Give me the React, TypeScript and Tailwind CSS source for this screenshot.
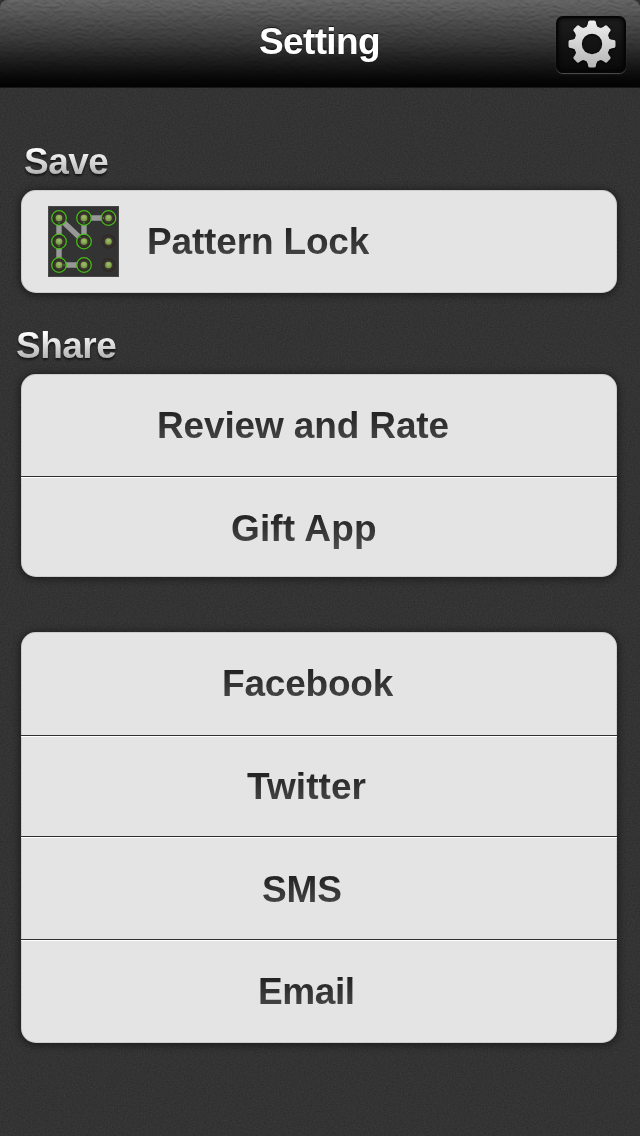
import React from "react";

type Row = { label: string; box: string; text: string };

const shareRows: Row[] = [
  { label: "Review and Rate", box: "h-[102px] pt-[30px] pl-[136px]", text: "tracking-[-0.14px]" },
  { label: "Gift App", box: "h-[101px] pt-[30px] pl-[210px]", text: "tracking-[0.15px]" },
];

const socialRows: Row[] = [
  { label: "Facebook", box: "h-[103px] pt-[30px] pl-[201px]", text: "tracking-[-0.2px]" },
  { label: "Twitter", box: "h-[101px] pt-[29px] pl-[226px]", text: "tracking-[0.08px]" },
  { label: "SMS", box: "h-[103px] pt-[31px] pl-[241px]", text: "tracking-[-0.08px]" },
  { label: "Email", box: "h-[104px] pt-[30px] pl-[237px]", text: "tracking-[-0.4px]" },
];

const panel =
  "mx-[21px] w-[596px] overflow-hidden rounded-[15px] bg-[#e4e4e4] shadow-[0_1px_7px_2px_rgba(0,0,0,0.4),inset_0_0_0_1px_rgba(150,150,150,0.3)]";
const rowText =
  "block whitespace-nowrap bg-linear-to-b from-[#242424] from-20% to-[#505050] bg-clip-text text-[37px] leading-[44px] font-bold text-transparent";
const heading =
  "block w-max whitespace-nowrap bg-linear-to-b from-white from-20% to-[#aaaaaa] to-85% bg-clip-text text-[37px] leading-[44px] font-bold text-transparent drop-shadow-[0_2px_1px_rgba(0,0,0,0.6)]";

function RowList({ rows }: { rows: Row[] }) {
  return (
    <ul className={panel}>
      {rows.map((r, i) => (
        <li
          key={r.label}
          className={`${r.box} ${i > 0 ? "border-t border-[#303030] shadow-[inset_0_1px_0_#ffffff]" : ""}`}
        >
          <span className={`${rowText} ${r.text} w-max`}>{r.label}</span>
        </li>
      ))}
    </ul>
  );
}

function Grain() {
  return (
    <svg className="pointer-events-none absolute inset-0 h-full w-full" aria-hidden="true">
      <filter id="grain" x="0" y="0" width="100%" height="100%" colorInterpolationFilters="sRGB">
        <feTurbulence type="fractalNoise" baseFrequency="0.7" numOctaves="2" seed="4" />
        <feColorMatrix values="0.08 0 0 0 0.162  0.08 0 0 0 0.162  0.08 0 0 0 0.162  0 0 0 0 1" />
      </filter>
      <rect width="100%" height="100%" filter="url(#grain)" />
    </svg>
  );
}

function Leather() {
  return (
    <svg className="pointer-events-none absolute inset-0 h-full w-full opacity-15 mix-blend-overlay" aria-hidden="true">
      <filter id="leather" x="0" y="0" width="100%" height="100%" colorInterpolationFilters="sRGB">
        <feTurbulence type="turbulence" baseFrequency="0.12 0.22" numOctaves="2" seed="9" />
        <feDiffuseLighting surfaceScale="1.6" diffuseConstant="0.75" lightingColor="#ffffff">
          <feDistantLight azimuth="270" elevation="42" />
        </feDiffuseLighting>
      </filter>
      <rect width="100%" height="100%" filter="url(#leather)" />
    </svg>
  );
}

function Gear() {
  const teeth = [0, 45, 90, 135, 180, 225, 270, 315];
  return (
    <svg className="mb-[1px] ml-[1px] h-[50px] w-[50px] drop-shadow-[0_1px_1px_#000]" viewBox="-25 -25 50 50" aria-hidden="true">
      <defs>
        <linearGradient id="metal" gradientUnits="userSpaceOnUse" x1="0" y1="-24" x2="0" y2="24">
          <stop offset="0" stopColor="#f0f0f0" />
          <stop offset="1" stopColor="#b4b4b4" />
        </linearGradient>
        <mask id="gearShape" maskUnits="userSpaceOnUse" x="-25" y="-25" width="50" height="50">
          <circle r="18" fill="white" />
          {teeth.map((a) => (
            <path
              key={a}
              transform={`rotate(${a})`}
              d="M-7.5 -15.5 Q-4.8 -17 -4.2 -20 L-3.9 -22 Q-3.6 -23.5 -2.2 -23.5 H2.2 Q3.6 -23.5 3.9 -22 L4.2 -20 Q4.8 -17 7.5 -15.5Z"
              fill="white"
            />
          ))}
          <circle r="10.2" fill="black" />
        </mask>
      </defs>
      <rect x="-25" y="-25" width="50" height="50" fill="url(#metal)" mask="url(#gearShape)" />
    </svg>
  );
}

function PatternIcon() {
  const xs = [11, 36, 60.5];
  const ys = [12, 35.5, 59];
  return (
    <svg className="h-[71px] w-[71px]" viewBox="0 0 71 71" aria-hidden="true">
      <defs>
        <radialGradient id="knob">
          <stop offset="0" stopColor="#4b443e" />
          <stop offset="0.6" stopColor="#3b3430" />
          <stop offset="1" stopColor="#2a2522" />
        </radialGradient>
        <radialGradient id="led" cy="0.35">
          <stop offset="0" stopColor="#a4bf70" />
          <stop offset="1" stopColor="#7a9f45" />
        </radialGradient>
      </defs>
      <rect width="71" height="71" fill="#333333" />
      <rect x="0.5" y="0.5" width="70" height="70" fill="none" stroke="#484848" />
      <path d="M60.5 12H36V35.5L11 12V59H36" fill="none" stroke="#989898" strokeWidth="5.4" />
      {ys.map((y, j) =>
        xs.map((x, i) => {
          const active = !(i === 2 && j > 0);
          return (
            <g key={`${i}-${j}`} transform={`translate(${x} ${y})`}>
              <circle r="7" fill="url(#knob)" />
              <circle r="3.3" fill="url(#led)" />
              {active && <circle r="7.3" fill="none" stroke="#46bd17" strokeWidth="1.3" />}
            </g>
          );
        }),
      )}
      <g fill="#349319">
        <path d="M34.8 16.2H37.2L36 18.4Z" />
        <path d="M9.8 39.6H12.2L11 41.8Z" />
        <path d="M9.8 16.2H12.2L11 18.4Z" />
        <path d="M15.5 57.8V60.2L17.5 59Z" />
        <path d="M56 10.8V13.2L54 12Z" />
        <path d="M31.5 32.5L33.5 31.2L31.2 30.5Z" />
      </g>
    </svg>
  );
}

export default function App() {
  return (
    <div className="relative h-[1136px] w-[640px] overflow-hidden bg-[#323232] font-['Liberation_Sans',Arial,sans-serif]">
      <Grain />
      <div className="relative flex flex-col">
        <header className="relative isolate flex h-[88px] items-start justify-end overflow-hidden rounded-t-[8px] border-b border-[#171717] bg-linear-to-b from-[#646464] via-[#343434] via-50% to-[#020202]">
          <Leather />
          <h1 className="relative mt-[20px] mr-[174px] w-[123px] text-[37px] leading-[44px] font-bold tracking-[-0.65px] whitespace-nowrap text-white [text-shadow:0_-1px_1px_rgba(0,0,0,0.7)]">
            Setting
          </h1>
          <button
            aria-label="Settings"
            className="relative mt-[16px] mr-[14px] flex h-[57px] w-[70px] items-center justify-center rounded-[7px] border-2 border-[#060606] bg-linear-to-b from-[#1d1d1d] to-[#0a0a0a] shadow-[0_1px_1px_rgba(125,125,125,0.6),inset_0_0_5px_#000]"
          >
            <Gear />
          </button>
        </header>
        <main className="flex flex-col">
          <h2 className={`${heading} mt-[52px] ml-[24px] tracking-[-0.5px]`}>Save</h2>
          <section className={`${panel} mt-[6px] flex h-[103px] items-start pl-[27px]`}>
            <div className="mt-4">
              <PatternIcon />
            </div>
            <span className={`${rowText} mt-[30px] ml-[28px] tracking-[-0.16px]`}>Pattern Lock</span>
          </section>
          <h2 className={`${heading} mt-[31px] ml-[16px] tracking-[-0.5px]`}>Share</h2>
          <div className="mt-[6px]">
            <RowList rows={shareRows} />
          </div>
          <div className="mt-[55px]">
            <RowList rows={socialRows} />
          </div>
        </main>
      </div>
    </div>
  );
}
